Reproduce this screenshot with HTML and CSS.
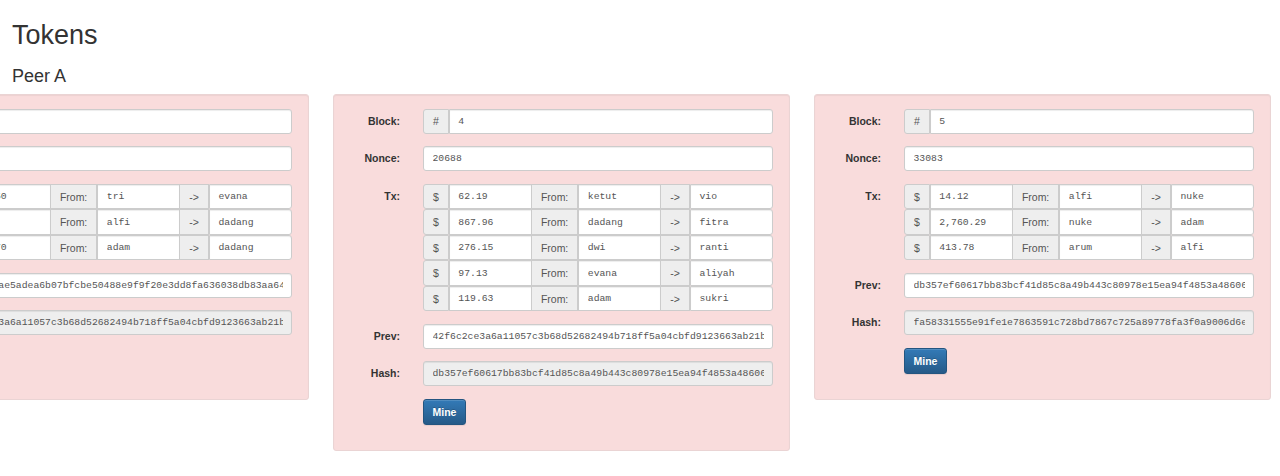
FILE: index.html
```html
<!DOCTYPE html>
<html lang="en">
<head>
  <meta charset="UTF-8" />
  <meta name="viewport" content="width=device-width, initial-scale=1.0"/>
  <title>Blockchain Demo - Tokens</title>
  <link rel="stylesheet" href="styles.css">
</head>
<body>
  <header class="page-head">
    <h1>Tokens</h1>
    <h3>Peer A</h3>
  </header>

  <div class="chain">

    <!-- block 3 -->
    <form class="block well-error">
      <div class="field">
        <label>Block:</label>
        <div class="input-group">
          <span class="addon">#</span>
          <input class="field-input" type="text" value="3" />
        </div>
      </div>
      <div class="field">
        <label>Nonce:</label>
        <input class="field-input single" type="text" value="71024" />
      </div>
      <div class="field">
        <label>Tx:</label>
        <div class="tx-list">
          <div class="input-group tx">
            <span class="addon">$</span>
            <input class="field-input" type="text" value="98.50" />
            <span class="addon">From:</span>
            <input class="field-input" type="text" value="tri" />
            <span class="addon">-&gt;</span>
            <input class="field-input" type="text" value="evana" />
          </div>
          <div class="input-group tx">
            <span class="addon">$</span>
            <input class="field-input" type="text" value="950" />
            <span class="addon">From:</span>
            <input class="field-input" type="text" value="alfi" />
            <span class="addon">-&gt;</span>
            <input class="field-input" type="text" value="dadang" />
          </div>
          <div class="input-group tx">
            <span class="addon">$</span>
            <input class="field-input" type="text" value="35.70" />
            <span class="addon">From:</span>
            <input class="field-input" type="text" value="adam" />
            <span class="addon">-&gt;</span>
            <input class="field-input" type="text" value="dadang" />
          </div>
        </div>
      </div>
      <div class="field">
        <label>Prev:</label>
        <input class="field-input single" type="text" value="5c1e9b07ae5adea6b07bfcbe50488e9f9f20e3dd8fa636038db83aa64e12f0c9" />
      </div>
      <div class="field">
        <label>Hash:</label>
        <input class="field-input single hash" type="text" readonly value="42f6c2ce3a6a11057c3b68d52682494b718ff5a04cbfd9123663ab21b9d04e7a" />
      </div>
      <div class="field">
        <span></span>
        <button type="button" class="btn-mine">Mine</button>
      </div>
    </form>

    <!-- block 4 -->
    <form class="block well-error">
      <div class="field">
        <label>Block:</label>
        <div class="input-group">
          <span class="addon">#</span>
          <input class="field-input" type="text" value="4" />
        </div>
      </div>
      <div class="field">
        <label>Nonce:</label>
        <input class="field-input single" type="text" value="20688" />
      </div>
      <div class="field">
        <label>Tx:</label>
        <div class="tx-list">
          <div class="input-group tx">
            <span class="addon">$</span>
            <input class="field-input" type="text" value="62.19" />
            <span class="addon">From:</span>
            <input class="field-input" type="text" value="ketut" />
            <span class="addon">-&gt;</span>
            <input class="field-input" type="text" value="vio" />
          </div>
          <div class="input-group tx">
            <span class="addon">$</span>
            <input class="field-input" type="text" value="867.96" />
            <span class="addon">From:</span>
            <input class="field-input" type="text" value="dadang" />
            <span class="addon">-&gt;</span>
            <input class="field-input" type="text" value="fitra" />
          </div>
          <div class="input-group tx">
            <span class="addon">$</span>
            <input class="field-input" type="text" value="276.15" />
            <span class="addon">From:</span>
            <input class="field-input" type="text" value="dwi" />
            <span class="addon">-&gt;</span>
            <input class="field-input" type="text" value="ranti" />
          </div>
          <div class="input-group tx">
            <span class="addon">$</span>
            <input class="field-input" type="text" value="97.13" />
            <span class="addon">From:</span>
            <input class="field-input" type="text" value="evana" />
            <span class="addon">-&gt;</span>
            <input class="field-input" type="text" value="aliyah" />
          </div>
          <div class="input-group tx">
            <span class="addon">$</span>
            <input class="field-input" type="text" value="119.63" />
            <span class="addon">From:</span>
            <input class="field-input" type="text" value="adam" />
            <span class="addon">-&gt;</span>
            <input class="field-input" type="text" value="sukri" />
          </div>
        </div>
      </div>
      <div class="field">
        <label>Prev:</label>
        <input class="field-input single" type="text" value="42f6c2ce3a6a11057c3b68d52682494b718ff5a04cbfd9123663ab21b9d04e7a" />
      </div>
      <div class="field">
        <label>Hash:</label>
        <input class="field-input single hash" type="text" readonly value="db357ef60617bb83bcf41d85c8a49b443c80978e15ea94f4853a486063f1a2b8" />
      </div>
      <div class="field">
        <span></span>
        <button type="button" class="btn-mine">Mine</button>
      </div>
    </form>

    <!-- block 5 -->
    <form class="block well-error">
      <div class="field">
        <label>Block:</label>
        <div class="input-group">
          <span class="addon">#</span>
          <input class="field-input" type="text" value="5" />
        </div>
      </div>
      <div class="field">
        <label>Nonce:</label>
        <input class="field-input single" type="text" value="33083" />
      </div>
      <div class="field">
        <label>Tx:</label>
        <div class="tx-list">
          <div class="input-group tx">
            <span class="addon">$</span>
            <input class="field-input" type="text" value="14.12" />
            <span class="addon">From:</span>
            <input class="field-input" type="text" value="alfi" />
            <span class="addon">-&gt;</span>
            <input class="field-input" type="text" value="nuke" />
          </div>
          <div class="input-group tx">
            <span class="addon">$</span>
            <input class="field-input" type="text" value="2,760.29" />
            <span class="addon">From:</span>
            <input class="field-input" type="text" value="nuke" />
            <span class="addon">-&gt;</span>
            <input class="field-input" type="text" value="adam" />
          </div>
          <div class="input-group tx">
            <span class="addon">$</span>
            <input class="field-input" type="text" value="413.78" />
            <span class="addon">From:</span>
            <input class="field-input" type="text" value="arum" />
            <span class="addon">-&gt;</span>
            <input class="field-input" type="text" value="alfi" />
          </div>
        </div>
      </div>
      <div class="field">
        <label>Prev:</label>
        <input class="field-input single" type="text" value="db357ef60617bb83bcf41d85c8a49b443c80978e15ea94f4853a486063f1a2b8" />
      </div>
      <div class="field">
        <label>Hash:</label>
        <input class="field-input single hash" type="text" readonly value="fa58331555e91fe1e7863591c728bd7867c725a89778fa3f0a9006d6e4b20c17" />
      </div>
      <div class="field">
        <span></span>
        <button type="button" class="btn-mine">Mine</button>
      </div>
    </form>

  </div>
</body>
</html>
```

FILE: styles.css
```css
body {
  margin: 0;
  background-color: #fff;
  color: #333;
  font-family: "Liberation Sans", Arial, sans-serif;
  font-size: 10.5px;
}

.page-head {
  padding: 0 12px;
}

.page-head h1 {
  margin: 21px 0 0;
  font-size: 27px;
  font-weight: normal;
  line-height: 1.1;
}

.page-head h3 {
  margin: 16px 0 7.5px;
  font-size: 18px;
  font-weight: normal;
  line-height: 1.1;
}

/* chain is scrolled to the last block, older ones run off the left */
.chain {
  display: flex;
  justify-content: flex-end;
  align-items: flex-start;
  gap: 24px;
  padding-right: 9px;
  overflow: hidden;
}

.block {
  flex: 0 0 457px;
  min-width: 0;
  box-sizing: border-box;
  display: flex;
  flex-direction: column;
  gap: 12.5px;
  margin: 0;
  padding: 14px 16px 25.5px 14px;
  border: 1px solid #ead4d4;
  border-radius: 3px;
  box-shadow: inset 0 1px 1px rgba(0, 0, 0, 0.05);
}

.well-error {
  background-color: #f9dcdc;
}

.field {
  display: grid;
  grid-template-columns: 52px minmax(0, 1fr);
  column-gap: 23px;
  align-items: start;
}

.field label {
  text-align: right;
  font-weight: bold;
  line-height: 24px;
  color: #333;
}

.input-group {
  display: flex;
  height: 25px;
}

.tx-list .input-group {
  height: 25.5px;
}

.addon {
  display: flex;
  align-items: center;
  box-sizing: border-box;
  padding: 0 9px;
  background-color: #eee;
  border: 1px solid #ccc;
  color: #555;
  font-size: 10.5px;
}

.input-group > * + * {
  margin-left: -1px;
}

.input-group > :first-child {
  border-radius: 3px 0 0 3px;
}

.input-group > :last-child {
  border-radius: 0 3px 3px 0;
}

.field-input {
  flex: 1 1 0;
  width: 0;
  min-width: 0;
  box-sizing: border-box;
  height: 100%;
  margin: 0;
  padding: 0 8.5px;
  background-color: #fff;
  border: 1px solid #ccc;
  border-radius: 0;
  box-shadow: inset 0 1px 1px rgba(0, 0, 0, 0.075);
  color: #555;
  font-family: "Liberation Mono", "DejaVu Sans Mono", monospace;
  font-size: 9.75px;
  outline: none;
}

.field-input.single {
  width: 100%;
  height: 25px;
  border-radius: 3px;
}

.field-input.hash {
  background-color: #eee;
}

.btn-mine {
  grid-column: 2;
  justify-self: start;
  height: 26px;
  padding: 0 8.5px;
  background: linear-gradient(#337ab7, #265a88);
  border: 1px solid #245580;
  border-radius: 3px;
  box-shadow: inset 0 1px 0 rgba(255, 255, 255, 0.15), 0 1px 1px rgba(0, 0, 0, 0.075);
  color: #fff;
  font-family: "Liberation Sans", Arial, sans-serif;
  font-size: 10.5px;
  font-weight: bold;
  text-shadow: 0 -1px 0 rgba(0, 0, 0, 0.2);
  cursor: pointer;
}
```
